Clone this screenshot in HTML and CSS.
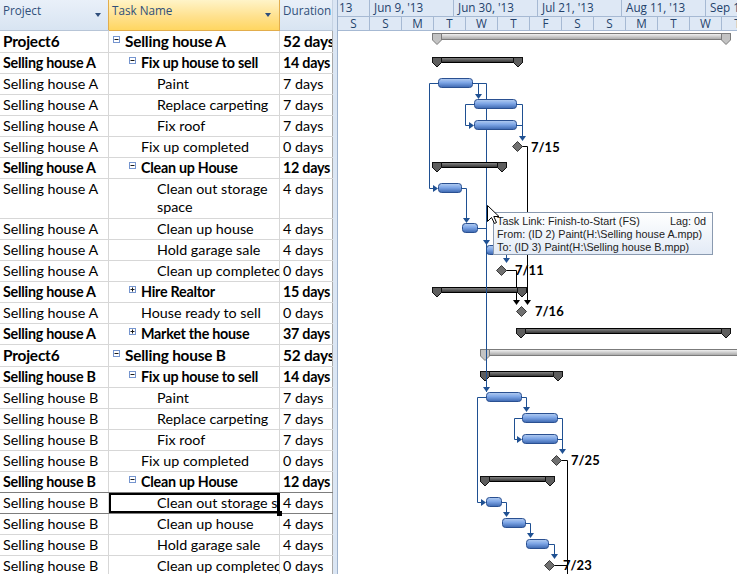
FILE: index.html
```html
<!DOCTYPE html>
<html>
<head>
<meta charset="utf-8">
<link rel="stylesheet" href="styles.css">
</head>
<body>
<div class="app">
  <div class="sheet">
    <div class="hdr">
      <div class="hc">Project<span class="dd"></span></div>
      <div class="hc active">Task Name<span class="dd"></span></div>
      <div class="hc">Duration</div>
    </div>

    <div class="row proj">
      <div class="c">Project6</div>
      <div class="c t l1"><svg class="tog" viewBox="0 0 7 7"><rect x=".5" y=".5" width="6" height="6"/><path d="M1.5 3.5h4"/></svg>Selling house A</div>
      <div class="c d">52 days</div>
    </div>
    <div class="row sum">
      <div class="c">Selling house A</div>
      <div class="c t l2"><svg class="tog" viewBox="0 0 7 7"><rect x=".5" y=".5" width="6" height="6"/><path d="M1.5 3.5h4"/></svg>Fix up house to sell</div>
      <div class="c d">14 days</div>
    </div>
    <div class="row"><div class="c">Selling house A</div><div class="c t l3">Paint</div><div class="c d">7 days</div></div>
    <div class="row"><div class="c">Selling house A</div><div class="c t l3">Replace carpeting</div><div class="c d">7 days</div></div>
    <div class="row"><div class="c">Selling house A</div><div class="c t l3">Fix roof</div><div class="c d">7 days</div></div>
    <div class="row"><div class="c">Selling house A</div><div class="c t l2">Fix up completed</div><div class="c d">0 days</div></div>
    <div class="row sum">
      <div class="c">Selling house A</div>
      <div class="c t l2"><svg class="tog" viewBox="0 0 7 7"><rect x=".5" y=".5" width="6" height="6"/><path d="M1.5 3.5h4"/></svg>Clean up House</div>
      <div class="c d">12 days</div>
    </div>
    <div class="row wrap"><div class="c">Selling house A</div><div class="c t l3">Clean out storage space</div><div class="c d">4 days</div></div>
    <div class="row"><div class="c">Selling house A</div><div class="c t l3">Clean up house</div><div class="c d">4 days</div></div>
    <div class="row"><div class="c">Selling house A</div><div class="c t l3">Hold garage sale</div><div class="c d">4 days</div></div>
    <div class="row"><div class="c">Selling house A</div><div class="c t l3">Clean up completed</div><div class="c d">0 days</div></div>
    <div class="row sum">
      <div class="c">Selling house A</div>
      <div class="c t l2"><svg class="tog" viewBox="0 0 7 7"><rect x=".5" y=".5" width="6" height="6"/><path d="M1.5 3.5h4M3.5 1.5v4"/></svg>Hire Realtor</div>
      <div class="c d">15 days</div>
    </div>
    <div class="row"><div class="c">Selling house A</div><div class="c t l2">House ready to sell</div><div class="c d">0 days</div></div>
    <div class="row sum">
      <div class="c">Selling house A</div>
      <div class="c t l2"><svg class="tog" viewBox="0 0 7 7"><rect x=".5" y=".5" width="6" height="6"/><path d="M1.5 3.5h4M3.5 1.5v4"/></svg>Market the house</div>
      <div class="c d">37 days</div>
    </div>

    <div class="row proj">
      <div class="c">Project6</div>
      <div class="c t l1"><svg class="tog" viewBox="0 0 7 7"><rect x=".5" y=".5" width="6" height="6"/><path d="M1.5 3.5h4"/></svg>Selling house B</div>
      <div class="c d">52 days</div>
    </div>
    <div class="row sum">
      <div class="c">Selling house B</div>
      <div class="c t l2"><svg class="tog" viewBox="0 0 7 7"><rect x=".5" y=".5" width="6" height="6"/><path d="M1.5 3.5h4"/></svg>Fix up house to sell</div>
      <div class="c d">14 days</div>
    </div>
    <div class="row"><div class="c">Selling house B</div><div class="c t l3">Paint</div><div class="c d">7 days</div></div>
    <div class="row"><div class="c">Selling house B</div><div class="c t l3">Replace carpeting</div><div class="c d">7 days</div></div>
    <div class="row"><div class="c">Selling house B</div><div class="c t l3">Fix roof</div><div class="c d">7 days</div></div>
    <div class="row"><div class="c">Selling house B</div><div class="c t l2">Fix up completed</div><div class="c d">0 days</div></div>
    <div class="row sum">
      <div class="c">Selling house B</div>
      <div class="c t l2"><svg class="tog" viewBox="0 0 7 7"><rect x=".5" y=".5" width="6" height="6"/><path d="M1.5 3.5h4"/></svg>Clean up House</div>
      <div class="c d">12 days</div>
    </div>
    <div class="row cur"><div class="c">Selling house B</div><div class="c t l3 sel"><span class="clip">Clean out storage space</span></div><div class="c d">4 days</div></div>
    <div class="row"><div class="c">Selling house B</div><div class="c t l3">Clean up house</div><div class="c d">4 days</div></div>
    <div class="row"><div class="c">Selling house B</div><div class="c t l3">Hold garage sale</div><div class="c d">4 days</div></div>
    <div class="row"><div class="c">Selling house B</div><div class="c t l3">Clean up completed</div><div class="c d">0 days</div></div>
  </div>

  <div class="splitter"></div>

  <div class="gantt">
    <div class="ts">
      <div class="tier major">
        <div class="tc first">13</div>
        <div class="tc">Jun 9, '13</div>
        <div class="tc">Jun 30, '13</div>
        <div class="tc">Jul 21, '13</div>
        <div class="tc">Aug 11, '13</div>
        <div class="tc">Sep 1, '13</div>
      </div>
      <div class="tier minor">
        <div class="tc first">S</div>
        <div class="tc">S</div>
        <div class="tc">M</div>
        <div class="tc">T</div>
        <div class="tc">W</div>
        <div class="tc">T</div>
        <div class="tc">F</div>
        <div class="tc">S</div>
        <div class="tc">S</div>
        <div class="tc">M</div>
        <div class="tc">T</div>
        <div class="tc">W</div>
        <div class="tc">T</div>
      </div>
    </div>

    <svg class="chart" width="399" height="543" viewBox="338 31 399 543">
      <defs>
        <linearGradient id="gBlue" x1="0" y1="0" x2="0" y2="1">
          <stop offset="0" stop-color="#b4cdf1"/>
          <stop offset=".45" stop-color="#7ea6e6"/>
          <stop offset="1" stop-color="#3c67b0"/>
        </linearGradient>
        <linearGradient id="gDark" x1="0" y1="0" x2="0" y2="1">
          <stop offset="0" stop-color="#8c8c8c"/>
          <stop offset="1" stop-color="#2f2f2f"/>
        </linearGradient>
        <linearGradient id="gLight" x1="0" y1="0" x2="0" y2="1">
          <stop offset="0" stop-color="#f6f6f6"/>
          <stop offset="1" stop-color="#a4a4a4"/>
        </linearGradient>
      </defs>

      <!-- link lines -->
      <g class="lk">
        <path d="M473 83.5H478.5V94"/>
        <path d="M473 83.5H486.5V387"/>
        <path d="M474 104.5H465.5V125.5H469"/>
        <path d="M517 104.5H522.5V136"/>
        <path d="M517 125.5H522.5"/>
        <path d="M438 83.5H429.5V188.5H433"/>
        <path d="M462 188.5H466.5V218"/>
        <path d="M478 228.5H486.5V240"/>
        <path d="M502 250.5H506.5V258"/>
        <path d="M486 397.5H477.5V502.5H481"/>
        <path d="M522 397.5H526.5V407"/>
        <path d="M522 418.5H514.5V439.5H517"/>
        <path d="M558 418.5H562.5V449"/>
        <path d="M558 439.5H562.5"/>
        <path d="M502 502.5H506.5V512"/>
        <path d="M526 523.5H530.5V533"/>
        <path d="M549 544.5H554.5V554"/>
      </g>
      <g class="ah">
        <path d="M475 94h7l-3.5 5z"/>
        <path d="M483 387h7l-3.5 5z"/>
        <path d="M469 122v7l5-3.5z"/>
        <path d="M519 136h7l-3.5 5z"/>
        <path d="M433 185v7l5-3.5z"/>
        <path d="M463 218h7l-3.5 5z"/>
        <path d="M483 240h7l-3.5 5z"/>
        <path d="M503 258h7l-3.5 5z"/>
        <path d="M481 499v7l5-3.5z"/>
        <path d="M523 407h7l-3.5 5z"/>
        <path d="M517 436v7l5-3.5z"/>
        <path d="M559 449h7l-3.5 5z"/>
        <path d="M503 512h7l-3.5 5z"/>
        <path d="M527 533h7l-3.5 5z"/>
        <path d="M551 554h7l-3.5 5z"/>
      </g>
      <g class="lkx">
        <path d="M522 146.5H527.5V300"/>
        <path d="M506 270.5H516.5V300"/>
        <path d="M561 460.5H567.5V574"/>
        <path d="M554 565.5H567.5"/>
      </g>
      <g class="ahx">
        <path d="M513 300h7l-3.5 5z"/>
        <path d="M524 300h7l-3.5 5z"/>
      </g>

      <!-- project summary bars -->
      <g class="ps">
        <rect x="432.5" y="33.5" width="298" height="6"/>
        <path d="M432.5 33.5h9v6.5l-4.5 4.5l-4.5-4.5z"/>
        <path d="M721.5 33.5h9v6.5l-4.5 4.5l-4.5-4.5z"/>
        <rect x="480.5" y="349.5" width="279" height="6"/>
        <path d="M480.5 349.5h9v6.5l-4.5 4.5l-4.5-4.5z"/>
      </g>

      <!-- summary bars -->
      <g class="ss">
        <rect x="432.5" y="57.5" width="90" height="5"/>
        <path d="M432.5 57.5h9v5l-4.5 4.5l-4.5-4.5z"/>
        <path d="M513.5 57.5h9v5l-4.5 4.5l-4.5-4.5z"/>

        <rect x="432.5" y="162.5" width="74" height="5"/>
        <path d="M432.5 162.5h9v5l-4.5 4.5l-4.5-4.5z"/>
        <path d="M497.5 162.5h9v5l-4.5 4.5l-4.5-4.5z"/>

        <rect x="432.5" y="287.5" width="94" height="5"/>
        <path d="M432.5 287.5h9v5l-4.5 4.5l-4.5-4.5z"/>
        <path d="M517.5 287.5h9v5l-4.5 4.5l-4.5-4.5z"/>

        <rect x="516.5" y="328.5" width="214" height="5"/>
        <path d="M516.5 328.5h9v5l-4.5 4.5l-4.5-4.5z"/>
        <path d="M721.5 328.5h9v5l-4.5 4.5l-4.5-4.5z"/>

        <rect x="480.5" y="371.5" width="82" height="5"/>
        <path d="M480.5 371.5h9v5l-4.5 4.5l-4.5-4.5z"/>
        <path d="M553.5 371.5h9v5l-4.5 4.5l-4.5-4.5z"/>

        <rect x="480.5" y="476.5" width="74" height="5"/>
        <path d="M480.5 476.5h9v5l-4.5 4.5l-4.5-4.5z"/>
        <path d="M545.5 476.5h9v5l-4.5 4.5l-4.5-4.5z"/>
      </g>

      <!-- task bars -->
      <g class="tb">
        <rect x="438.5" y="78.5" width="34" height="9"/>
        <rect x="474.5" y="99.5" width="42" height="9"/>
        <rect x="474.5" y="120.5" width="42" height="9"/>
        <rect x="438.5" y="183.5" width="23" height="9"/>
        <rect x="462.5" y="223.5" width="15" height="9"/>
        <rect x="486.5" y="245.5" width="15" height="9"/>
        <rect x="486.5" y="392.5" width="35" height="9"/>
        <rect x="522.5" y="413.5" width="35" height="9"/>
        <rect x="522.5" y="434.5" width="35" height="9"/>
        <rect x="486.5" y="497.5" width="15" height="9"/>
        <rect x="502.5" y="518.5" width="23" height="9"/>
        <rect x="526.5" y="539.5" width="22" height="9"/>
      </g>
      <path class="lk" d="M486.5 240V392"/>

      <!-- milestones -->
      <g class="ms">
        <path d="M517.5 141.5l5 5l-5 5l-5-5z"/>
        <path d="M501.5 265.5l5 5l-5 5l-5-5z"/>
        <path d="M521.5 306.5l5 5l-5 5l-5-5z"/>
        <path d="M556.5 455.5l5 5l-5 5l-5-5z"/>
        <path d="M549.5 560.5l5 5l-5 5l-5-5z"/>
      </g>
      <g class="lbl">
        <text x="531" y="151.5">7/15</text>
        <text x="515" y="275">7/11</text>
        <text x="535" y="316">7/16</text>
        <text x="571" y="465">7/25</text>
        <text x="563" y="570">7/23</text>
      </g>
    </svg>

    <div class="tip">
      <div class="tip-line"><span>Task Link: Finish-to-Start (FS)</span><span>Lag: 0d</span></div>
      <div class="tip-line">From: (ID 2) Paint(H:\Selling house A.mpp)</div>
      <div class="tip-line">To: (ID 3) Paint(H:\Selling house B.mpp)</div>
    </div>
    <svg class="cursor" width="13" height="20" viewBox="0 0 13 20">
      <path d="M0.5 0.5V16.5L4.5 12.5L7.5 18.5L9.5 17.5L6.8 11.5H12z"/>
    </svg>
  </div>
</div>
</body>
</html>
```

FILE: styles.css
```css
html, body {
  margin: 0;
  padding: 0;
}
body {
  width: 737px;
  height: 574px;
  overflow: hidden;
  background: #fff;
  font-family: Lato, "Liberation Sans", sans-serif;
  color: #000;
}
.app {
  display: flex;
  height: 574px;
  overflow: hidden;
}

/* ---------- sheet ---------- */
.sheet {
  width: 333px;
  flex: none;
  overflow: hidden;
}
.hdr,
.row {
  display: grid;
  grid-template-columns: 109px 171px 53px;
}
.hdr {
  height: 31px;
  box-sizing: border-box;
  border-bottom: 1px solid #b7c5d7;
  background: linear-gradient(#e9f0f9, #d8e4f2);
}
.hc {
  box-sizing: border-box;
  border-right: 1px solid #c5d2e2;
  padding: 3px 0 0 3px;
  font-family: "Open Sans", "Noto Sans", sans-serif;
  font-size: 11.7px;
  line-height: 15px;
  color: #30507a;
  display: flex;
  justify-content: space-between;
  align-items: flex-start;
  white-space: nowrap;
  overflow: hidden;
}
.hc.active {
  background: linear-gradient(#fff4c8, #ffe18e 55%, #ffd661);
  border-right-color: #e2ad4c;
  box-shadow: -1px 0 0 #e2ad4c, 0 1px 0 #e2ad4c;
}
.dd {
  width: 0;
  height: 0;
  margin: 10px 7px 0 0;
  border-left: 3.5px solid transparent;
  border-right: 3.5px solid transparent;
  border-top: 4px solid #2f4e7c;
}
.hc.active .dd {
  margin-right: 8px;
}

.row {
  height: 21px;
  box-sizing: border-box;
  border-bottom: 1px solid #d7d7d7;
  font-size: 14.3px;
  line-height: 20px;
}
.row.proj {
  height: 22px;
  font-size: 15.4px;
  font-weight: bold;
  line-height: 21px;
  letter-spacing: -0.2px;
}
.row.sum {
  font-weight: bold;
  letter-spacing: -0.25px;
}
.row.wrap {
  height: 40px;
  line-height: 18px;
}
.row.wrap .c {
  padding-top: 1px;
  white-space: normal;
}
.c {
  box-sizing: border-box;
  border-right: 1px solid #d7d7d7;
  padding-left: 3px;
  white-space: nowrap;
  overflow: hidden;
}
.c.d {
  padding-left: 3px;
  border-right-color: #a9a9a9;
}
.c.t {
  display: flex;
  align-items: flex-start;
}
.row.wrap .c.t {
  display: block;
}
.c.l1 { padding-left: 16px; }
.c.l2 { padding-left: 32px; }
.c.l3 { padding-left: 48px; }

.tog {
  flex: none;
  width: 7px;
  height: 7px;
  margin: 4px 5px 0 -12px;
}
.proj .tog {
  margin-top: 5px;
}
.tog rect {
  fill: #fff;
  stroke: #7595cf;
}
.tog path {
  stroke: #1a1a1a;
  fill: none;
}

.row.cur {
  border-bottom-color: #7d7d7d;
  box-shadow: 0 -1px 0 #7d7d7d;
}
.c.sel {
  position: relative;
  overflow: visible;
  box-shadow: inset 0 0 0 2px #000;
  border-right-color: #000;
  padding-right: 2px;
}
.c.sel .clip {
  display: block;
  min-width: 0;
  overflow: hidden;
  white-space: nowrap;
}
.c.sel::after {
  content: "";
  position: absolute;
  right: -3px;
  bottom: -3px;
  width: 5px;
  height: 5px;
  background: #000;
}

/* ---------- splitter ---------- */
.splitter {
  width: 5px;
  flex: none;
  box-sizing: border-box;
  background: #dbe6f4;
  border-right: 1px solid #9fb3cd;
}

/* ---------- gantt ---------- */
.gantt {
  position: relative;
  flex: 1;
  overflow: hidden;
  background: #fff;
}
.ts {
  height: 31px;
  background: #dee8f5;
  font-family: "Open Sans", "Noto Sans", sans-serif;
  font-size: 11.7px;
  color: #23426b;
}
.tier {
  display: flex;
  box-sizing: border-box;
  border-bottom: 1px solid #a6b9d3;
  white-space: nowrap;
}
.tier.major {
  height: 17px;
  line-height: 15px;
}
.tier.minor {
  height: 14px;
  line-height: 13px;
}
.tc {
  flex: none;
  box-sizing: border-box;
  border-right: 1px solid #a6b9d3;
  overflow: hidden;
}
.major .tc {
  width: 84px;
  padding-left: 4px;
}
.major .tc.first {
  width: 32px;
  padding-left: 1px;
}
.minor .tc {
  width: 32px;
  text-align: center;
}

.chart {
  display: block;
}
.lk path, path.lk {
  fill: none;
  stroke: #1f5092;
  stroke-width: 1;
}
.ah path {
  fill: #1f5092;
}
.lkx path {
  fill: none;
  stroke: #000;
}
.ahx path {
  fill: #000;
}
.ps rect {
  fill: url(#gLight);
  stroke: #7b7b7b;
}
.ps path {
  fill: #c3c3c3;
  stroke: #7b7b7b;
}
.ss rect {
  fill: url(#gDark);
  stroke: #000;
}
.ss path {
  fill: #5e5e5e;
  stroke: #111;
}
.tb rect {
  fill: url(#gBlue);
  stroke: #2a5091;
  rx: 3px;
  ry: 3px;
}
.ms path {
  fill: #707070;
  stroke: #3a3a3a;
}
.lbl text {
  font-family: Lato, "Liberation Sans", sans-serif;
  font-weight: bold;
  font-size: 13px;
  fill: #000;
}

.tip {
  position: absolute;
  left: 155px;
  top: 212px;
  width: 220px;
  height: 43px;
  box-sizing: border-box;
  padding: 2px 6px 0 3px;
  border: 1px solid #8a9ab0;
  background: linear-gradient(#ffffff, #e3ebf6);
  font-family: "Liberation Sans", Arial, sans-serif;
  font-size: 10.8px;
  line-height: 13px;
  color: #222;
  white-space: nowrap;
}
.tip-line {
  display: flex;
  justify-content: space-between;
}
.cursor {
  position: absolute;
  left: 149px;
  top: 205px;
}
.cursor path {
  fill: #fff;
  stroke: #000;
  stroke-width: 1;
  stroke-linejoin: miter;
}
```
